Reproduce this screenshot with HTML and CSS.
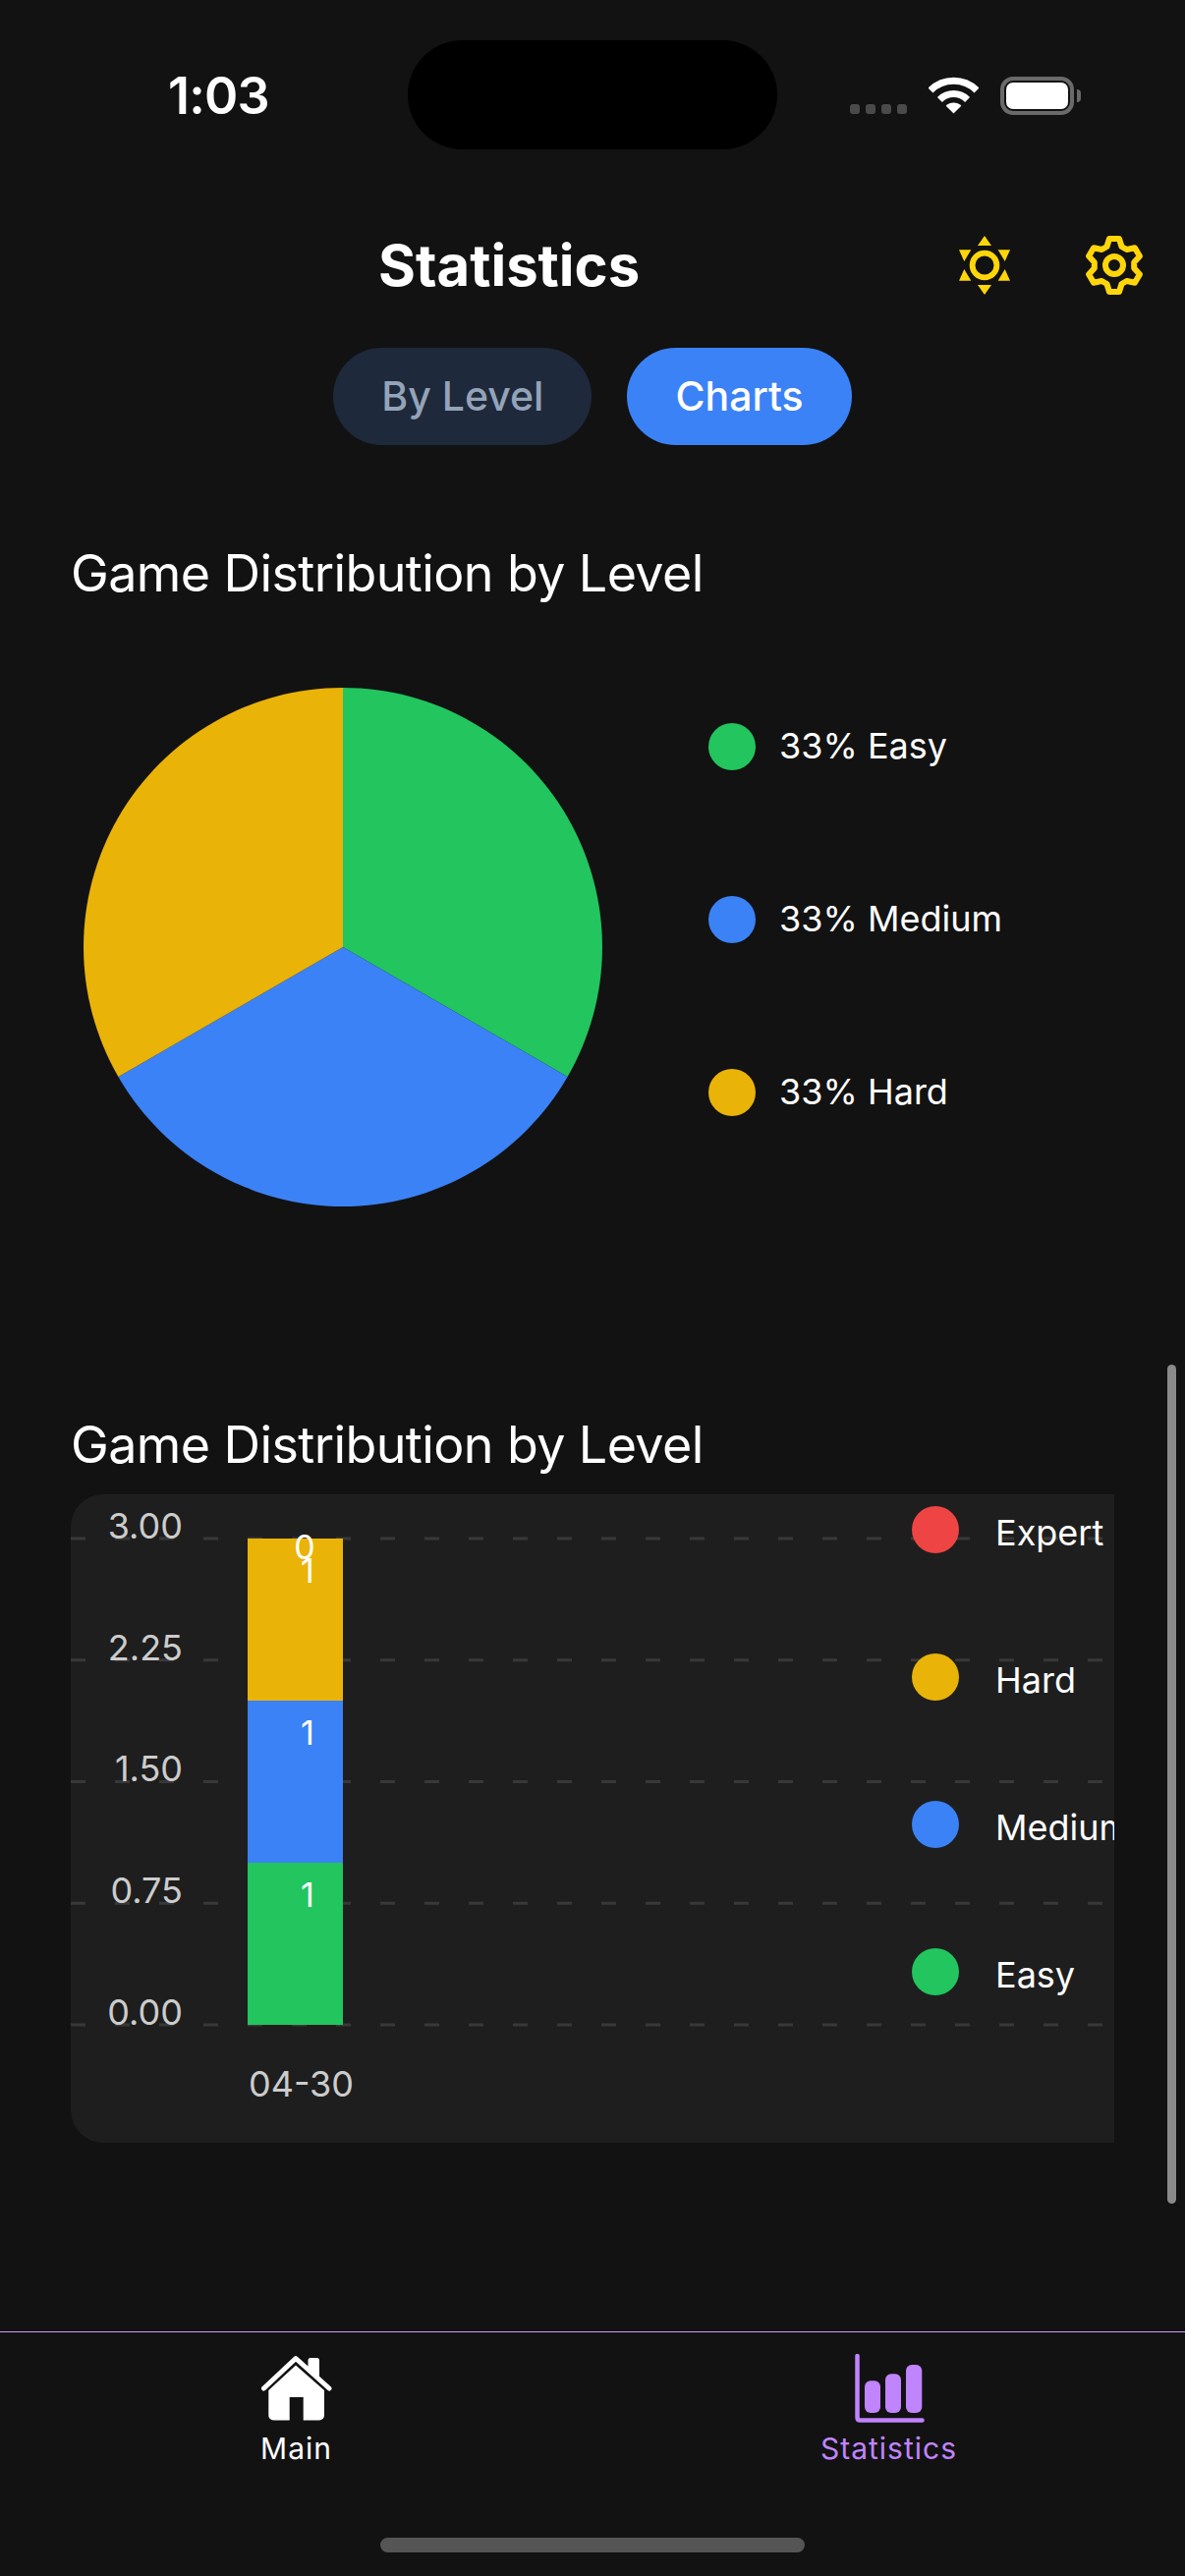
FILE: index.html
```html
<!DOCTYPE html>
<html lang="en">
<head>
    <meta charset="UTF-8">
    <meta name="viewport" content="width=device-width, initial-scale=1.0">
    <title>Statistics</title>
    <link rel="stylesheet" href="styles.css">
</head>
<body>
    <div class="island"></div>

    <div class="status-bar">
        <span class="time">1:03</span>
        <div class="status-icons">
            <div class="signal"><i></i><i></i><i></i><i></i></div>
            <svg class="wifi" width="51" height="38" viewBox="0 0 51 38">
                <path d="M2 14A33.3 33.3 0 0 1 49 14" fill="none" stroke="#fff" stroke-width="7"/>
                <path d="M11.4 23.4A20 20 0 0 1 39.6 23.4" fill="none" stroke="#fff" stroke-width="7"/>
                <path d="M25.5 37.5L17.7 29.7A11 11 0 0 1 33.3 29.7Z" fill="#fff"/>
            </svg>
            <div class="battery"><div class="battery-level"></div></div>
        </div>
    </div>

    <div class="header">
        <h1 class="page-title">Statistics</h1>
        <div class="header-actions">
            <svg width="60" height="60" viewBox="-30 -30 60 60">
                <circle r="12.4" fill="none" stroke="#ffd60a" stroke-width="5.8"/>
                <path d="M0-30L-7-20H7ZM0 30L-7 20H7ZM26-15.7H13.7L20.7-4ZM-26-15.7H-13.7L-20.7-4ZM26 15.7H13.7L20.7 4ZM-26 15.7H-13.7L-20.7 4Z" fill="#ffd60a"/>
            </svg>
            <svg width="60" height="60" viewBox="-30 -30 60 60">
                <circle r="9" fill="none" stroke="#ffd60a" stroke-width="6"/>
                <path d="M-5-27H5L7.5-19L12.7-16L20.9-17.8L25.9-9.2L20.2-3V3L25.9 9.2L20.9 17.8L12.7 16L7.5 19L5 27H-5L-7.5 19L-12.7 16L-20.9 17.8L-25.9 9.2L-20.2 3V-3L-25.9-9.2L-20.9-17.8L-12.7-16L-7.5-19Z" fill="none" stroke="#ffd60a" stroke-width="6" stroke-linejoin="round"/>
            </svg>
        </div>
    </div>

    <div class="tabs">
        <div class="tab">By Level</div>
        <div class="tab tab-active">Charts</div>
    </div>

    <div class="section">
        <h2 class="section-title">Game Distribution by Level</h2>
        <div class="pie-row">
            <svg class="pie" width="528" height="528" viewBox="0 0 528 528">
                <path d="M264 264V0A264 264 0 0 1 492.6 396Z" fill="#22c55e"/>
                <path d="M264 264L492.6 396A264 264 0 0 1 35.4 396Z" fill="#3b82f6"/>
                <path d="M264 264L35.4 396A264 264 0 0 1 264 0Z" fill="#eab308"/>
            </svg>
            <div class="pie-legend">
                <div class="legend-item"><span class="dot dot-easy"></span><span class="pie-text">33% Easy</span></div>
                <div class="legend-item"><span class="dot dot-medium"></span><span class="pie-text">33% Medium</span></div>
                <div class="legend-item"><span class="dot dot-hard"></span><span class="pie-text">33% Hard</span></div>
            </div>
        </div>
    </div>

    <div class="section section-bars">
        <h2 class="section-title">Game Distribution by Level</h2>
        <div class="chart-card">
            <svg class="bar-chart" width="1062" height="660" viewBox="0 0 1062 660">
                <g class="grid">
                    <line x1="0" x2="1050" y1="45" y2="45"/>
                    <line x1="0" x2="1050" y1="168.75" y2="168.75"/>
                    <line x1="0" x2="1050" y1="292.5" y2="292.5"/>
                    <line x1="0" x2="1050" y1="416.25" y2="416.25"/>
                    <line x1="0" x2="1050" y1="540" y2="540"/>
                </g>
                <g class="axis-labels">
                    <text x="114" y="45">3.00</text>
                    <text x="114" y="169">2.25</text>
                    <text x="114" y="292">1.50</text>
                    <text x="114" y="416">0.75</text>
                    <text x="114" y="540">0.00</text>
                </g>
                <rect x="180" y="45" width="97" height="165" fill="#eab308"/>
                <rect x="180" y="210" width="97" height="165" fill="#3b82f6"/>
                <rect x="180" y="375" width="97" height="165" fill="#22c55e"/>
                <g class="bar-values">
                    <text x="238" y="66">0</text>
                    <text x="241" y="90">1</text>
                    <text x="241" y="255">1</text>
                    <text x="241" y="420">1</text>
                </g>
                <text class="date-label" x="181" y="613">04-30</text>
            </svg>
            <div class="chart-legend">
                <div class="chart-legend-item"><span class="dot dot-expert"></span><span class="legend-text">Expert</span></div>
                <div class="chart-legend-item"><span class="dot dot-hard"></span><span class="legend-text">Hard</span></div>
                <div class="chart-legend-item"><span class="dot dot-medium"></span><span class="legend-text">Medium</span></div>
                <div class="chart-legend-item"><span class="dot dot-easy"></span><span class="legend-text">Easy</span></div>
            </div>
        </div>
    </div>

    <div class="scrollbar"></div>

    <div class="tab-bar">
        <div class="tab-item">
            <svg width="72" height="72" viewBox="0 0 72 72">
                <path d="M47.5 14V6.5a2.5 2.5 0 0 1 2.5-2.5h6.5a2.5 2.5 0 0 1 2.5 2.5V25Z" fill="#fff"/>
                <path d="M2.5 35L35 4.5L69 35" fill="none" stroke="#fff" stroke-width="5" stroke-linecap="round" stroke-linejoin="round"/>
                <path d="M35 11.5L64 37V62.5a5 5 0 0 1-5 5H42.7V44H28.7V67.5H12.3a5 5 0 0 1-5-5V37Z" fill="#fff"/>
            </svg>
            <span class="tab-label">Main</span>
        </div>
        <div class="tab-item tab-item-active">
            <svg width="72" height="72" viewBox="0 0 72 72">
                <path d="M3.5 2V64.5Q3.5 67.5 6.5 67.5H69.5" fill="none" stroke="#c084fc" stroke-width="4.5" stroke-linecap="round"/>
                <rect x="11" y="27.3" width="16" height="32.7" rx="6" fill="#c084fc"/>
                <rect x="32" y="20.3" width="16" height="39.7" rx="6" fill="#c084fc"/>
                <rect x="53" y="11" width="16.3" height="49" rx="6" fill="#c084fc"/>
            </svg>
            <span class="tab-label">Statistics</span>
        </div>
    </div>

    <div class="home-indicator"></div>
</body>
</html>
```

FILE: styles.css
```css
* {
    margin: 0;
    padding: 0;
    box-sizing: border-box;
}

body {
    position: relative;
    display: flex;
    flex-direction: column;
    width: 1206px;
    height: 2622px;
    overflow: hidden;
    background-color: #121212;
    color: #fff;
    font-family: Inter, "Noto Sans", sans-serif;
}

/* status bar */
.island {
    position: absolute;
    top: 41px;
    left: 415px;
    width: 376px;
    height: 111px;
    border-radius: 56px;
    background-color: #000;
}

.status-bar {
    display: flex;
    justify-content: space-between;
    height: 230px;
    padding: 72px 113px 0 171px;
}

.time {
    font-size: 52px;
    font-weight: 600;
    line-height: 52px;
    letter-spacing: -0.8px;
}

.status-icons {
    display: flex;
    align-items: flex-start;
    height: 46px;
    padding-top: 6px;
}

.signal {
    display: flex;
    gap: 6px;
    margin: 28px 22px 0 0;
}

.signal i {
    width: 10px;
    height: 10px;
    border-radius: 3px;
    background-color: #4a4a4a;
}

.wifi {
    margin-right: 22px;
}

.battery {
    position: relative;
    width: 75px;
    height: 39px;
    padding: 2px;
    border: 4px solid #6a6a6a;
    border-radius: 13px;
}

.battery::after {
    content: "";
    position: absolute;
    top: 9px;
    right: -11px;
    width: 4px;
    height: 13px;
    border-radius: 0 4px 4px 0;
    background-color: #6a6a6a;
}

.battery-level {
    width: 100%;
    height: 100%;
    border-radius: 7px;
    background-color: #fff;
}

/* header */
.header {
    display: flex;
    align-items: center;
    justify-content: space-between;
    height: 80px;
    padding: 0 42px 0 385px;
}

.page-title {
    font-size: 58px;
    font-weight: 700;
    line-height: 80px;
}

.header-actions {
    display: flex;
    gap: 72px;
}

.tabs {
    display: flex;
    justify-content: center;
    gap: 36px;
    margin-top: 44px;
}

.tab {
    display: flex;
    align-items: center;
    height: 99px;
    padding: 0 49px 2px;
    border-radius: 50px;
    background-color: #1e293b;
    color: #94a3b8;
    font-size: 41px;
    font-weight: 500;
}

.tab-active {
    background-color: #3b82f6;
    color: #fff;
}

/* sections */
.section {
    padding: 96px 72px 0;
}

.section-title {
    font-size: 52px;
    font-weight: 400;
    line-height: 70px;
    letter-spacing: -0.6px;
}

.pie-row {
    display: flex;
    align-items: flex-start;
    gap: 108px;
    margin-top: 81px;
    padding-left: 13px;
}

.pie {
    flex-shrink: 0;
}

.pie-legend {
    display: flex;
    flex-direction: column;
    gap: 128px;
    margin-top: 36px;
}

.legend-item,
.chart-legend-item {
    display: flex;
    align-items: center;
    height: 48px;
    font-size: 36px;
    white-space: nowrap;
}

.pie-text {
    padding-bottom: 2px;
}

.dot {
    flex-shrink: 0;
    width: 48px;
    height: 48px;
    margin-right: 24px;
    border-radius: 50%;
}

.dot-expert { background-color: #ef4444; }
.dot-hard { background-color: #eab308; }
.dot-medium { background-color: #3b82f6; }
.dot-easy { background-color: #22c55e; }

/* bar chart */
.section-bars {
    padding-top: 208px;
}

.chart-card {
    position: relative;
    height: 660px;
    margin-top: 15px;
    overflow: hidden;
    border-radius: 33px 0 0 33px;
    background-color: #1e1e1e;
}

.bar-chart {
    display: block;
}

.grid line {
    stroke: #383838;
    stroke-width: 3;
    stroke-dasharray: 15 30;
}

.axis-labels text {
    fill: #ccc;
    font-size: 36px;
    text-anchor: end;
}

.bar-values text {
    fill: #fff;
    font-size: 34px;
    text-anchor: middle;
}

.date-label {
    fill: #ccc;
    font-size: 36px;
}

.chart-legend {
    position: absolute;
    top: 12px;
    left: 856px;
    display: flex;
    flex-direction: column;
    gap: 102px;
}

.chart-legend-item .dot {
    margin-right: 37px;
}

.legend-text {
    padding-top: 6px;
}

.scrollbar {
    position: absolute;
    top: 1389px;
    right: 9px;
    width: 9px;
    height: 854px;
    border-radius: 5px;
    background-color: #8a8a8a;
}

/* bottom tabs */
.tab-bar {
    display: flex;
    height: 249px;
    margin-top: auto;
    border-top: 1px solid #c9a0ff;
}

.tab-item {
    display: flex;
    flex: 1;
    flex-direction: column;
    align-items: center;
    padding-top: 22px;
}

.tab-label {
    margin-top: 6px;
    font-size: 30px;
    line-height: 36px;
    letter-spacing: 1px;
}

.tab-item-active .tab-label {
    color: #c084fc;
}

.home-indicator {
    position: absolute;
    bottom: 24px;
    left: 387px;
    width: 432px;
    height: 15px;
    border-radius: 8px;
    background-color: #555;
}
```
